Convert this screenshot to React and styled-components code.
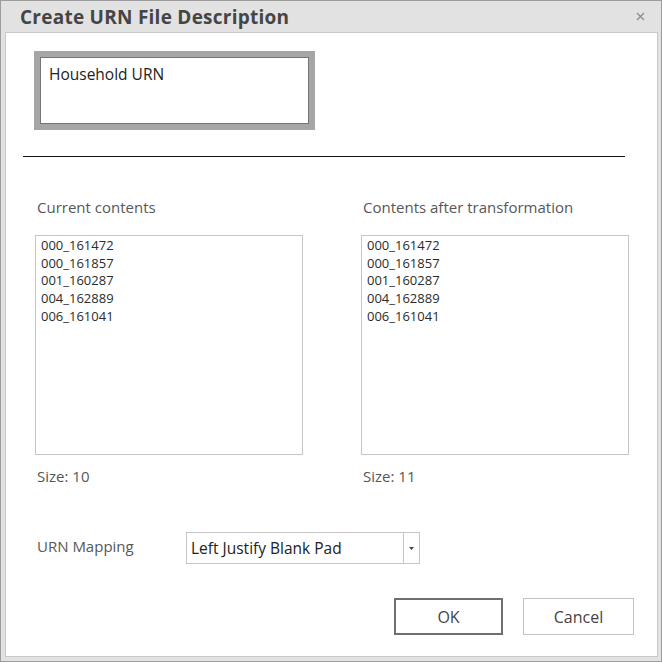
import React from 'react';
import styled, { createGlobalStyle } from 'styled-components';

const GlobalStyle = createGlobalStyle`
    html, body {
        margin: 0;
        padding: 0;
        background: #ffffff;
    }
    body {
        font-family: "Open Sans", "Noto Sans", sans-serif;
    }
`;

const currentItems = ['000_161472', '000_161857', '001_160287', '004_162889', '006_161041'];
const afterItems = ['000_161472', '000_161857', '001_160287', '004_162889', '006_161041'];

export default function App() {
    return (
        <>
            <GlobalStyle />
            <Window>
                <TitleBar>
                    <Title>Create URN File Description</Title>
                    <CloseButton aria-label="close">
                        <svg width="9" height="9" viewBox="0 0 9 9">
                            <path d="M1 1 L8 8 M8 1 L1 8" stroke="#8a8a8a" strokeWidth="1.2" fill="none" />
                        </svg>
                    </CloseButton>
                </TitleBar>
                <Panel>
                    <NameFrame>
                        <NameBox>Household URN</NameBox>
                    </NameFrame>
                    <Rule />
                    <Columns>
                        <Column>
                            <Label>Current contents</Label>
                            <ListBox>
                                {currentItems.map((item) => <ListItem key={item}>{item}</ListItem>)}
                            </ListBox>
                            <SizeLabel>Size: 10</SizeLabel>
                        </Column>
                        <Column>
                            <Label>Contents after transformation</Label>
                            <ListBox>
                                {afterItems.map((item) => <ListItem key={item}>{item}</ListItem>)}
                            </ListBox>
                            <SizeLabel>Size: 11</SizeLabel>
                        </Column>
                    </Columns>
                    <MappingRow>
                        <MappingLabel>URN Mapping</MappingLabel>
                        <Select>
                            <SelectValue>Left Justify Blank Pad</SelectValue>
                            <SelectArrow>
                                <svg width="5" height="3" viewBox="0 0 5 3">
                                    <path d="M0 0 L5 0 L2.5 3 Z" fill="#444" />
                                </svg>
                            </SelectArrow>
                        </Select>
                    </MappingRow>
                    <ButtonRow>
                        <Button primary>OK</Button>
                        <Button>Cancel</Button>
                    </ButtonRow>
                </Panel>
            </Window>
        </>
    );
}

const Window = styled.div`
    width: 662px;
    height: 662px;
    box-sizing: border-box;
    border: 1px solid #9c9c9c;
    background: #e2e2e2;
    padding: 0 3px 4px 4px;
    display: flex;
    flex-direction: column;
`;

const TitleBar = styled.div`
    height: 31px;
    display: flex;
    align-items: center;
    justify-content: space-between;
    padding: 0 12px 0 15px;
`;

const Title = styled.div`
    font-size: 19px;
    font-weight: 700;
    color: #454545;
    letter-spacing: 0.25px;
`;

const CloseButton = styled.div`
    display: flex;
    align-items: center;
    justify-content: center;
    width: 12px;
    height: 12px;
`;

const Panel = styled.div`
    flex: 1;
    background: #ffffff;
    border: 1px solid #c8c8c8;
    display: flex;
    flex-direction: column;
    padding-top: 18px;
`;

const NameFrame = styled.div`
    margin-left: 28px;
    width: 281px;
    height: 79px;
    box-sizing: border-box;
    background: #a6a6a6;
    padding: 6px;
    display: flex;
`;

const NameBox = styled.div`
    flex: 1;
    background: #ffffff;
    border: 1px solid #747474;
    padding: 6px 8px;
    font-size: 15.5px;
    line-height: 20px;
    color: #222;
`;

const Rule = styled.div`
    margin: 26px 32px 0 17px;
    height: 1px;
    background: #111;
`;

const Columns = styled.div`
    display: flex;
    gap: 58px;
    margin: 40px 0 0 29px;
`;

const Column = styled.div`
    width: 268px;
    display: flex;
    flex-direction: column;
`;

const Label = styled.div`
    font-size: 15px;
    line-height: 20px;
    color: #575757;
    padding-left: 2px;
`;

const ListBox = styled.div`
    margin-top: 18px;
    height: 220px;
    box-sizing: border-box;
    border: 1px solid #c6c6c6;
    padding: 1px 5px;
`;

const ListItem = styled.div`
    font-size: 13px;
    line-height: 17.7px;
    color: #2b2b2b;
`;

const SizeLabel = styled(Label)`
    margin-top: 11px;
`;

const MappingRow = styled.div`
    display: flex;
    align-items: center;
    margin: 46px 0 0 29px;
`;

const MappingLabel = styled(Label)`
    width: 149px;
    margin-top: -5px;
`;

const Select = styled.div`
    width: 234px;
    height: 32px;
    box-sizing: border-box;
    border: 1px solid #c6c6c6;
    display: flex;
    align-items: stretch;
`;

const SelectValue = styled.div`
    flex: 1;
    display: flex;
    align-items: center;
    padding-left: 4px;
    font-size: 15.5px;
    color: #222;
`;

const SelectArrow = styled.div`
    width: 15px;
    border-left: 1px solid #c6c6c6;
    display: flex;
    align-items: center;
    justify-content: center;
`;

const ButtonRow = styled.div`
    display: flex;
    justify-content: flex-end;
    gap: 20px;
    margin: 34px 23px 0 0;
`;

const Button = styled.div`
    width: ${(p) => (p.primary ? '109px' : '111px')};
    height: 37px;
    box-sizing: border-box;
    border: ${(p) => (p.primary ? '2px solid #6f6f6f' : '1px solid #c3c3c3')};
    background: #ffffff;
    display: flex;
    align-items: center;
    justify-content: center;
    font-size: 16px;
    color: #444;
`;
